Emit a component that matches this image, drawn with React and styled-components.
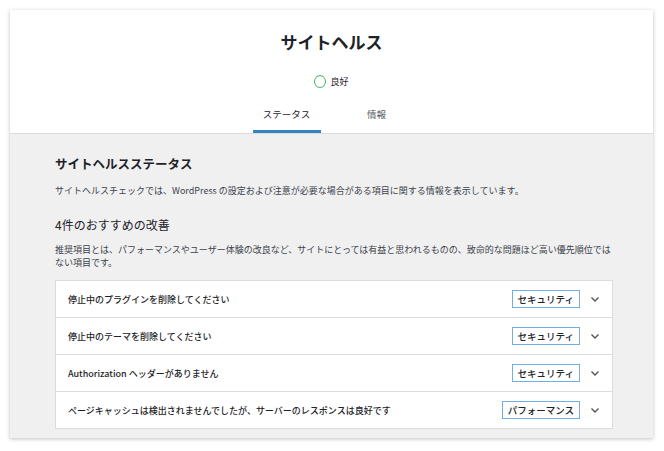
import React from "react";
import styled, { createGlobalStyle } from "styled-components";

const Global = createGlobalStyle`
  html,body{margin:0;background:#fff;}
  body{font-family:"Noto Sans CJK JP","Noto Sans",sans-serif;color:#1d2327;}
`;
const Frame = styled.div`padding:10px 11px 13px 10px;`;
const Card = styled.div`
  background:#f0f0f1;box-shadow:0 1px 4px rgba(0,0,0,.25);height:428px;overflow:hidden;
`;
const Header = styled.div`
  background:#fff;border-bottom:1px solid #dcdcde;display:flex;flex-direction:column;align-items:center;
`;
const Title = styled.h1`margin:22px 0 0;font-size:17px;font-weight:700;line-height:20px;`;
const Status = styled.div`margin-top:23px;display:flex;align-items:center;gap:4px;font-size:9px;line-height:12px;`;
const Ring = styled.span`width:12px;height:13px;border:1.5px solid #4ab866;border-radius:50%;box-sizing:border-box;`;
const Tabs = styled.div`margin-top:12px;display:flex;gap:22px;`;
const Tab = styled.div`
  width:68px;height:22px;padding-top:8px;text-align:center;font-size:9.5px;line-height:12px;
  color:${p=>p.active?"#1d2327":"#50575e"};
  border-bottom:3px solid ${p=>p.active?"#3582c4":"transparent"};
`;
const Body = styled.div`padding:22px 40px 0 45px;`;
const H2 = styled.h2`margin:0;font-size:12.5px;font-weight:700;line-height:16px;`;
const P = styled.p`margin:${p=>p.m};font-size:9px;line-height:13px;color:#3c434a;`;
const H3 = styled.h3`margin:20px 0 0;font-size:12px;font-weight:400;line-height:16px;`;
const List = styled.div`margin-top:11px;border:1px solid #dcdcde;background:#fff;`;
const Row = styled.div`
  height:36px;display:flex;align-items:center;padding:0 12px 0 12px;font-size:9px;font-weight:500;
  & + &{border-top:1px solid #dcdcde;}
`;
const Label = styled.span`flex:1;`;
const Badge = styled.span`
  border:1px solid #72aee6;padding:2px 5px;font-size:9.5px;line-height:12px;margin-right:10px;
`;

const items=[["停止中のプラグインを削除してください","セキュリティ"],["停止中のテーマを削除してください","セキュリティ"],["Authorization ヘッダーがありません","セキュリティ"],["ページキャッシュは検出されませんでしたが、サーバーのレスポンスは良好です","パフォーマンス"]];

export default function App(){
  return <Frame><Global/><Card>
    <Header>
      <Title>サイトヘルス</Title>
      <Status><Ring/>良好</Status>
      <Tabs><Tab active>ステータス</Tab><Tab>情報</Tab></Tabs>
    </Header>
    <Body>
      <H2>サイトヘルスステータス</H2>
      <P m="12px 0 0">サイトヘルスチェックでは、WordPress の設定および注意が必要な場合がある項目に関する情報を表示しています。</P>
      <H3>4件のおすすめの改善</H3>
      <P m="10px 0 0">推奨項目とは、パフォーマンスやユーザー体験の改良など、サイトにとっては有益と思われるものの、致命的な問題ほど高い優先順位ではない項目です。</P>
      <List>{items.map(([a,b])=><Row key={a}><Label>{a}</Label><Badge>{b}</Badge>
        <svg width="10" height="10" viewBox="0 0 10 10"><path d="M1.5 3.5 5 7l3.5-3.5" fill="none" stroke="#50575e" strokeWidth="1.4"/></svg>
      </Row>)}</List>
    </Body>
  </Card></Frame>;
}
